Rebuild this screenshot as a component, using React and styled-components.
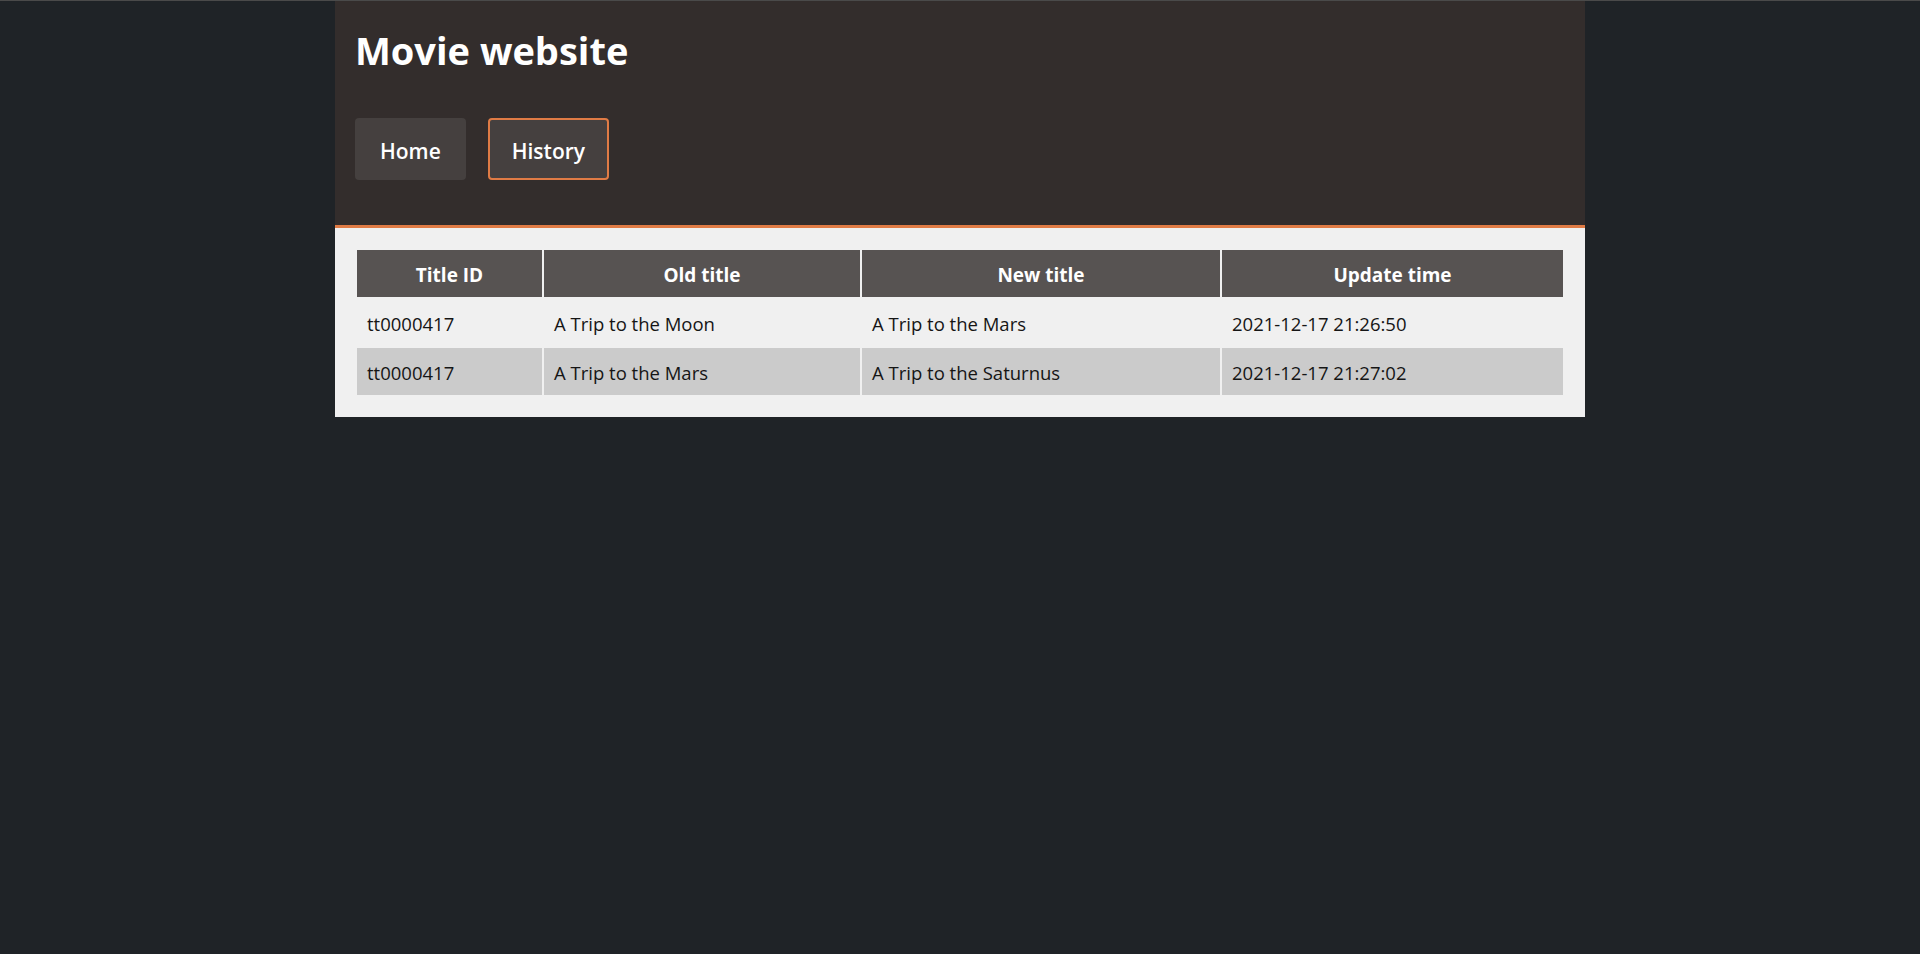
import React from "react";
import styled, { createGlobalStyle } from "styled-components";

const GlobalStyle = createGlobalStyle`
  html, body {
    margin: 0;
    padding: 0;
    background: #1f2327;
  }
  body {
    border-top: 1px solid #4a4a4a;
    font-family: "Open Sans", "Noto Sans", sans-serif;
  }
`;

const Page = styled.div`
  width: 1250px;
  margin: 0 auto;
`;

const Header = styled.header`
  background: #332d2c;
  padding: 23px 20px 45px;
  border-bottom: 3px solid #e07b45;
  display: flex;
  flex-direction: column;
  gap: 42px;
`;

const Title = styled.h1`
  margin: 0;
  color: #ffffff;
  font-size: 38px;
  line-height: 52px;
  font-weight: 700;
`;

const Nav = styled.nav`
  display: flex;
  gap: 22px;
`;

const NavButton = styled.a`
  display: inline-flex;
  align-items: center;
  height: 62px;
  box-sizing: border-box;
  padding: 3px ${(p) => (p.$active ? 22 : 23)}px 0;
  background: #45403f;
  color: #ffffff;
  font-size: 21px;
  font-weight: 600;
  text-decoration: none;
  border-radius: 4px;
  border: 2px solid ${(p) => (p.$active ? "#e07b45" : "transparent")};
  cursor: pointer;
`;

const Content = styled.main`
  background: #f0f0f0;
  padding: 20px;
`;

const Table = styled.table`
  width: 100%;
  border-spacing: 2px;
  border-collapse: separate;
  table-layout: fixed;
`;

const Th = styled.th`
  background: #575352;
  color: #ffffff;
  font-size: 19px;
  font-weight: 700;
  line-height: 27px;
  padding: 12px 10px 8px;
  text-align: center;
`;

const Td = styled.td`
  background: ${(p) => (p.$alt ? "#cbcbcb" : "#f0f0f0")};
  color: #151515;
  font-size: 18.5px;
  line-height: 27px;
  padding: 11px 10px 9px;
  text-align: left;
  white-space: nowrap;
`;

const columns = [
  { label: "Title ID", width: 185 },
  { label: "Old title", width: 316 },
  { label: "New title", width: 358 },
  { label: "Update time", width: 341 },
];

const rows = [
  ["tt0000417", "A Trip to the Moon", "A Trip to the Mars", "2021-12-17 21:26:50"],
  ["tt0000417", "A Trip to the Mars", "A Trip to the Saturnus", "2021-12-17 21:27:02"],
];

export default function App() {
  return (
    <>
      <GlobalStyle />
      <Page>
        <Header>
          <Title>Movie website</Title>
          <Nav>
            <NavButton>Home</NavButton>
            <NavButton $active>History</NavButton>
          </Nav>
        </Header>
        <Content>
          <Table>
            <colgroup>
              {columns.map((c) => (
                <col key={c.label} style={{ width: c.width }} />
              ))}
            </colgroup>
            <thead>
              <tr>
                {columns.map((c) => (
                  <Th key={c.label}>{c.label}</Th>
                ))}
              </tr>
            </thead>
            <tbody>
              {rows.map((r, i) => (
                <tr key={i}>
                  {r.map((cell, j) => (
                    <Td key={j} $alt={i % 2 === 1}>
                      {cell}
                    </Td>
                  ))}
                </tr>
              ))}
            </tbody>
          </Table>
        </Content>
      </Page>
    </>
  );
}
